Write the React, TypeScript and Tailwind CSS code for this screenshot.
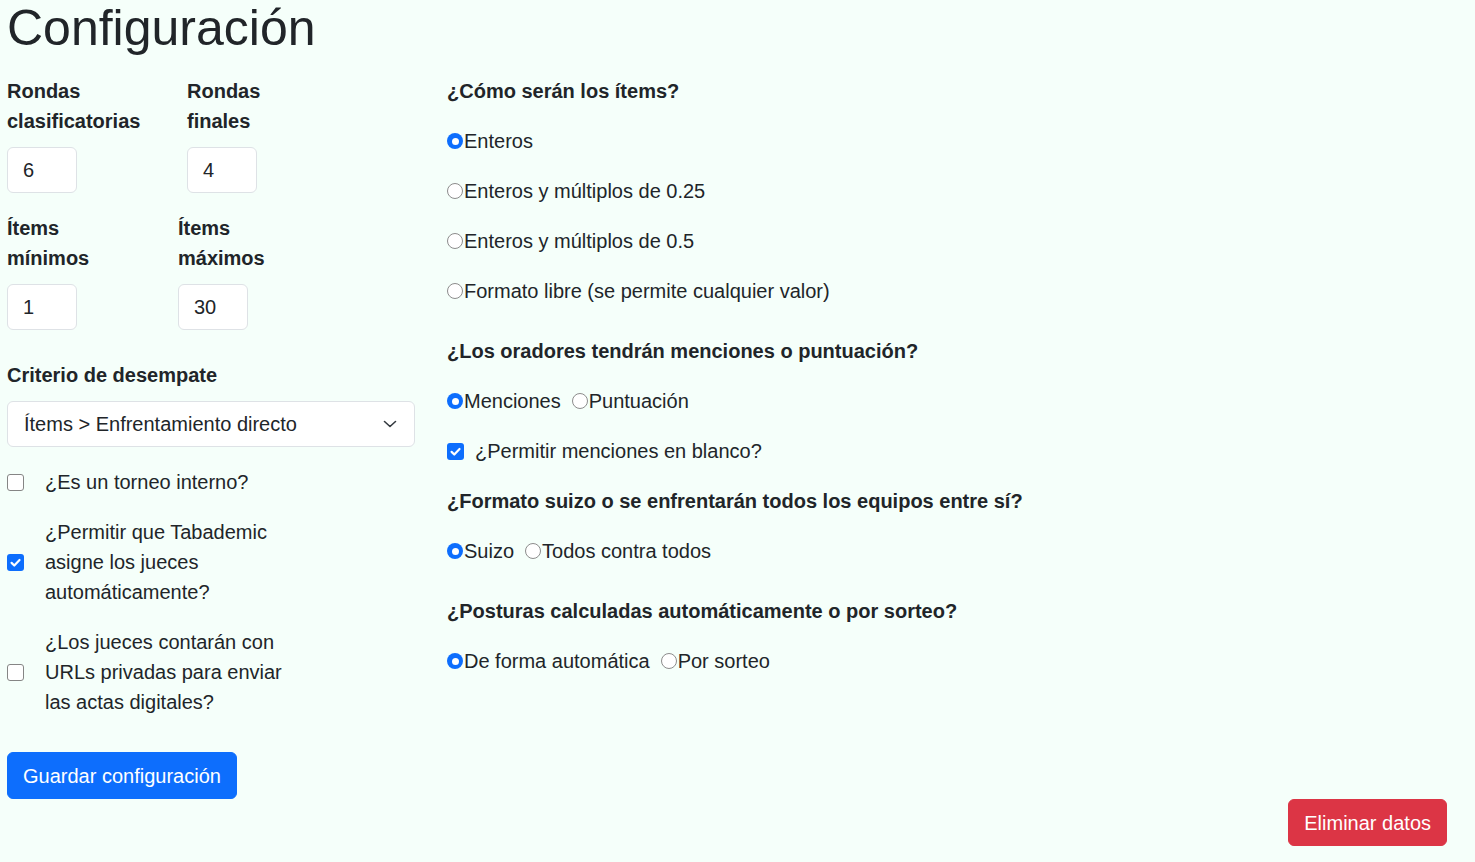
import React from "react";

function Radio({ checked }: { checked?: boolean }) {
  return checked ? (
    <span className="inline-flex h-4 w-4 shrink-0 items-center justify-center rounded-full bg-[#0d6efd]">
      <span className="h-[7px] w-[7px] rounded-full bg-white" />
    </span>
  ) : (
    <span className="inline-block h-4 w-4 shrink-0 rounded-full border border-[#8c8c8c] bg-white" />
  );
}

function Check({ checked }: { checked?: boolean }) {
  return checked ? (
    <span className="inline-flex h-[17px] w-[17px] shrink-0 items-center justify-center rounded-[3px] bg-[#0d6efd]">
      <svg width="15" height="15" viewBox="0 0 16 16" fill="none">
        <path d="M3.8 8.4l2.9 2.9L12.3 5.3" stroke="white" strokeWidth="2.3" strokeLinecap="round" strokeLinejoin="round" />
      </svg>
    </span>
  ) : (
    <span className="inline-block h-[17px] w-[17px] shrink-0 rounded-[3px] border border-[#858585] bg-white" />
  );
}

function RadioItem({ label, checked }: { label: string; checked?: boolean }) {
  return (
    <span className="inline-flex items-center">
      <Radio checked={checked} />
      <span className="ml-[1px]">{label}</span>
    </span>
  );
}

function NumField({ lines, value, width }: { lines: string[]; value: string; width: string }) {
  return (
    <div className={`flex flex-col ${width}`}>
      <label className="font-bold">
        {lines.map((l) => (
          <span key={l} className="block">{l}</span>
        ))}
      </label>
      <div className="mt-[11px] flex h-[46px] w-[70px] items-center rounded-[6px] border border-[#dee2e6] bg-white px-[15px]">
        {value}
      </div>
    </div>
  );
}

function CheckRow({ lines, checked }: { lines: string[]; checked?: boolean }) {
  return (
    <div className="flex items-center">
      <Check checked={checked} />
      <div className="ml-[21px]">
        {lines.map((l) => (
          <span key={l} className="block">{l}</span>
        ))}
      </div>
    </div>
  );
}

export default function App() {
  return (
    <div
      className="min-h-[862px] w-full bg-[#f5fffa] pb-[16px] text-[20px] leading-[30px] text-[#212529]"
      style={{ fontFamily: '"Liberation Sans", Arial, sans-serif' }}
    >
      <div className="pl-[7px]">
        <h1 className="h-[56px] text-[50px] leading-[56px] font-normal">Configuración</h1>
        <div className="mt-[20px] flex">
          {/* Left column */}
          <div className="flex w-[408px] flex-col">
            <div className="flex">
              <NumField lines={["Rondas", "clasificatorias"]} value="6" width="w-[180px]" />
              <NumField lines={["Rondas", "finales"]} value="4" width="w-[120px]" />
            </div>
            <div className="mt-[20px] flex">
              <NumField lines={["Ítems", "mínimos"]} value="1" width="w-[171px]" />
              <NumField lines={["Ítems", "máximos"]} value="30" width="w-[120px]" />
            </div>
            <label className="mt-[30px] font-bold">Criterio de desempate</label>
            <div className="mt-[11px] flex h-[46px] items-center justify-between rounded-[6px] border border-[#dee2e6] bg-white pl-[16px] pr-[16px]">
              <span>Ítems &gt; Enfrentamiento directo</span>
              <svg width="16" height="16" viewBox="0 0 16 16" fill="none">
                <path d="M2.5 5.5L8 10.5l5.5-5" stroke="#343a40" strokeWidth="1.6" strokeLinecap="round" strokeLinejoin="round" />
              </svg>
            </div>
            <div className="mt-[20px] flex flex-col gap-[20px]">
              <CheckRow lines={["¿Es un torneo interno?"]} />
              <CheckRow checked lines={["¿Permitir que Tabademic", "asigne los jueces", "automáticamente?"]} />
              <CheckRow lines={["¿Los jueces contarán con", "URLs privadas para enviar", "las actas digitales?"]} />
            </div>
            <div className="mt-[35px]">
              <button className="h-[47px] rounded-[6px] border border-[#0d6efd] bg-[#0d6efd] px-[15px] text-white">
                Guardar configuración
              </button>
            </div>
          </div>

          {/* Right column */}
          <div className="ml-[32px] flex flex-col">
            <div className="font-bold">¿Cómo serán los ítems?</div>
            <div className="mt-[20px] flex flex-col gap-[20px]">
              <RadioItem checked label="Enteros" />
              <RadioItem label="Enteros y múltiplos de 0.25" />
              <RadioItem label="Enteros y múltiplos de 0.5" />
              <RadioItem label="Formato libre (se permite cualquier valor)" />
            </div>
            <div className="mt-[30px] font-bold">¿Los oradores tendrán menciones o puntuación?</div>
            <div className="mt-[20px] flex gap-[11px]">
              <RadioItem checked label="Menciones" />
              <RadioItem label="Puntuación" />
            </div>
            <div className="mt-[20px] flex items-center">
              <Check checked />
              <span className="ml-[11px]">¿Permitir menciones en blanco?</span>
            </div>
            <div className="mt-[20px] font-bold">¿Formato suizo o se enfrentarán todos los equipos entre sí?</div>
            <div className="mt-[20px] flex gap-[11px]">
              <RadioItem checked label="Suizo" />
              <RadioItem label="Todos contra todos" />
            </div>
            <div className="mt-[30px] font-bold">¿Posturas calculadas automáticamente o por sorteo?</div>
            <div className="mt-[20px] flex gap-[11px]">
              <RadioItem checked label="De forma automática" />
              <RadioItem label="Por sorteo" />
            </div>
          </div>
        </div>
      </div>
      <div className="flex justify-end pr-[28px]">
        <button className="h-[47px] rounded-[6px] border border-[#dc3545] bg-[#dc3545] px-[15px] text-white">
          Eliminar datos
        </button>
      </div>
    </div>
  );
}
